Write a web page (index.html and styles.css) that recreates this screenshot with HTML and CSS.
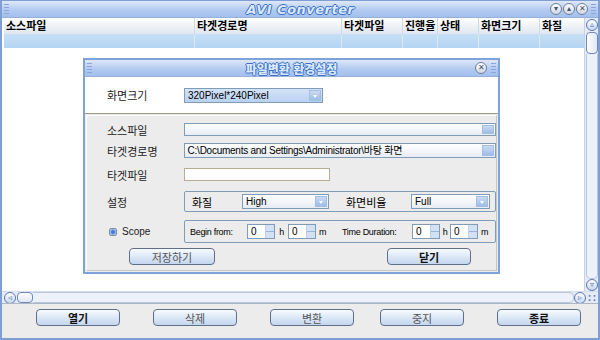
FILE: index.html
```html
<!DOCTYPE html>
<html lang="ko">
<head>
    <meta charset="UTF-8">
    <title>AVI Converter</title>
    <link rel="stylesheet" href="styles.css">
</head>
<body>
    <div class="app">
        <div class="titlebar">
            <span class="grip"></span>
            <span class="title">AVI Converter</span>
            <div class="win-btns">
                <span class="round-btn">&#9662;</span>
                <span class="round-btn">&#9652;</span>
                <span class="round-btn">&#10005;</span>
                <span class="grip"></span>
            </div>
        </div>

        <div class="main">
            <div class="list">
                <div class="list-head">
                    <div class="col c1">소스파일</div>
                    <div class="col c2">타겟경로명</div>
                    <div class="col c3">타겟파일</div>
                    <div class="col c4">진행율</div>
                    <div class="col c5">상태</div>
                    <div class="col c6">화면크기</div>
                    <div class="col c7">화질</div>
                </div>
                <div class="list-row">
                    <div class="col c1"></div>
                    <div class="col c2"></div>
                    <div class="col c3"></div>
                    <div class="col c4"></div>
                    <div class="col c5"></div>
                    <div class="col c6"></div>
                    <div class="col c7"></div>
                </div>
            </div>
            <div class="vscroll">
                <span class="sc-arrow">&#9653;</span>
                <span class="vthumb"></span>
                <span class="vtrack"></span>
                <span class="sc-arrow">&#9663;</span>
            </div>
        </div>

        <div class="hscroll">
            <span class="sc-arrow">&#9667;</span>
            <span class="hthumb"></span>
            <span class="htrack"></span>
            <span class="sc-arrow">&#9657;</span>
            <span class="corner">&#8759;</span>
        </div>

        <div class="footer">
            <button class="btn strong">열기</button>
            <button class="btn dim">삭제</button>
            <button class="btn dim">변환</button>
            <button class="btn dim">중지</button>
            <button class="btn strong">종료</button>
        </div>

        <!-- 환경설정 대화상자 -->
        <div class="dialog">
            <div class="dlg-title">
                <span class="grip"></span>
                <span class="title small">파일변환 환경설정</span>
                <div class="win-btns">
                    <span class="round-btn">&#10005;</span>
                    <span class="grip"></span>
                </div>
            </div>
            <div class="dlg-top">
                <span class="label">화면크기</span>
                <div class="combo w-size"><span class="val">320Pixel*240Pixel</span><span class="drop"></span></div>
            </div>
            <div class="dlg-panel">
                <div class="row r-src">
                    <span class="label">소스파일</span>
                    <div class="field wide"><span class="val"></span><span class="drop"></span></div>
                </div>
                <div class="row r-path">
                    <span class="label">타겟경로명</span>
                    <div class="field wide"><span class="val">C:\Documents and Settings\Administrator\바탕 화면</span><span class="drop"></span></div>
                </div>
                <div class="row r-file">
                    <span class="label">타겟파일</span>
                    <div class="text-input"></div>
                </div>
                <div class="row r-set">
                    <span class="label">설정</span>
                    <div class="group g-set">
                        <span class="sub">화질</span>
                        <div class="combo w-q"><span class="val">High</span><span class="drop"></span></div>
                        <span class="sub ratio">화면비율</span>
                        <div class="combo w-r"><span class="val">Full</span><span class="drop"></span></div>
                    </div>
                </div>
                <div class="row r-scope">
                    <span class="label check"><span class="box"></span>Scope</span>
                    <div class="group g-scope">
                        <span class="sm">Begin from:</span>
                        <div class="spin"><span class="num">0</span><span class="arrows"></span></div>
                        <span class="sm unit">h</span>
                        <div class="spin"><span class="num">0</span><span class="arrows"></span></div>
                        <span class="sm unit">m</span>
                        <span class="sm dur">Time Duration:</span>
                        <div class="spin"><span class="num">0</span><span class="arrows"></span></div>
                        <span class="sm unit tight">h</span>
                        <div class="spin"><span class="num">0</span><span class="arrows"></span></div>
                        <span class="sm unit">m</span>
                    </div>
                </div>
                <div class="row r-btns">
                    <button class="btn dim save">저장하기</button>
                    <button class="btn strong close">닫기</button>
                </div>
            </div>
        </div>
    </div>
</body>
</html>
```

FILE: styles.css
```css
* {
    box-sizing: border-box;
}

body {
    margin: 0;
    width: 600px;
    height: 340px;
    background-color: #fff;
    font-family: "Liberation Sans", "Noto Sans CJK KR", sans-serif;
    font-size: 11px;
    color: #000;
    overflow: hidden;
}

.app {
    width: 600px;
    height: 340px;
    border: 2px solid #7e9fd6;
    border-top-width: 1px;
    display: flex;
    flex-direction: column;
    position: relative;
    background-color: #fff;
}

/* title bars */
.titlebar,
.dlg-title {
    height: 17px;
    display: flex;
    align-items: center;
    background: linear-gradient(to bottom, #dfe8f8, #b3cbf1 55%, #a2bfee);
    border-bottom: 1px solid #97b1dc;
    position: relative;
}

.grip {
    width: 5px;
    height: 11px;
    margin: 0 2px;
    background: repeating-linear-gradient(to bottom, #8aa6d6 0, #8aa6d6 1px, transparent 1px, transparent 3px);
}

.title {
    flex: 1;
    text-align: center;
    font-family: "DejaVu Sans", sans-serif;
    font-size: 13px;
    font-weight: bold;
    font-style: italic;
    color: #dbe9ff;
    letter-spacing: 0.5px;
    text-shadow: 1px 0 0 #3b6fc6, -1px 0 0 #3b6fc6, 0 1px 0 #3b6fc6, 0 -1px 0 #3b6fc6;
    padding-left: 40px;
}

.title.small {
    font-family: "Noto Sans CJK KR", sans-serif;
    font-style: normal;
    font-size: 12px;
    font-weight: 900;
    letter-spacing: 0;
    padding-left: 14px;
}

.win-btns {
    display: flex;
    align-items: center;
    gap: 1px;
}

.round-btn {
    width: 12px;
    height: 12px;
    border-radius: 50%;
    border: 1px solid #6f7f99;
    background: linear-gradient(to bottom, #ffffff, #cfd7e4);
    font-size: 8px;
    line-height: 10px;
    text-align: center;
    color: #44546e;
}

/* list */
.main {
    flex: 1;
    display: flex;
    min-height: 0;
}

.list {
    flex: 1;
    padding-left: 2px;
}

.list-head,
.list-row {
    display: flex;
}

.list-head {
    height: 16px;
    background: linear-gradient(to bottom, #ffffff, #dfe6f0);
    font-family: "Noto Sans CJK KR", sans-serif;
    font-weight: bold;
    font-size: 11px;
    line-height: 15px;
}

.list-row {
    height: 14px;
    background: linear-gradient(to bottom, #c6dff6, #b4d4f3);
}

.col {
    border-right: 1px solid #cfd8e5;
    padding-left: 2px;
    white-space: nowrap;
}

.list-row .col {
    border-right-color: #dbe9f7;
}

.c1 { width: 191px; }
.c2 { width: 147px; }
.c3 { width: 61px; }
.c4 { width: 35px; }
.c5 { width: 41px; }
.c6 { width: 61px; }
.c7 { flex: 1; border-right: none; }

.vscroll {
    width: 14px;
    display: flex;
    flex-direction: column;
    align-items: center;
    background-color: #e6eaf6;
    border-left: 1px solid #c7d2e6;
    padding-top: 1px;
}

.sc-arrow {
    width: 12px;
    height: 12px;
    border-radius: 50%;
    border: 1px solid #5878b4;
    background: linear-gradient(to bottom, #ffffff, #c9d8f0);
    font-size: 8px;
    line-height: 10px;
    text-align: center;
    color: #4b6eb0;
}

.vthumb {
    width: 12px;
    height: 22px;
    margin-top: 1px;
    border-radius: 4px;
    border: 1px solid #6f89b8;
    background: linear-gradient(to right, #ffffff, #dfe7f5);
}

.vtrack {
    flex: 1;
    width: 12px;
    border: 1px solid #b8c6e0;
    border-top: none;
    border-radius: 0 0 5px 5px;
    background-color: #edf1fa;
}

.hscroll {
    height: 12px;
    display: flex;
    align-items: center;
    background-color: #e6eaf6;
    padding-left: 2px;
    border-top: 1px solid #d6ddeb;
}

.hthumb {
    width: 16px;
    height: 11px;
    margin-left: 1px;
    border-radius: 4px;
    border: 1px solid #6f89b8;
    background: linear-gradient(to bottom, #ffffff, #dfe7f5);
}

.htrack {
    flex: 1;
    height: 11px;
    border: 1px solid #b8c6e0;
    border-left: none;
    border-radius: 0 5px 5px 0;
    background-color: #edf1fa;
}

.corner {
    width: 12px;
    font-size: 10px;
    color: #5579bd;
    text-align: center;
    font-weight: bold;
}

/* footer buttons */
.footer {
    height: 35px;
    display: flex;
    align-items: flex-start;
    padding: 5px 0 0 34px;
    gap: 33px;
    background-color: #ececec;
    border-top: 1px solid #b0b7c4;
}

.btn {
    width: 84px;
    height: 17px;
    padding: 0;
    border: 1px solid #5f6f8a;
    border-radius: 4px;
    background: linear-gradient(to bottom, #f8fbff, #dce8f7 50%, #c4d6ee);
    font-family: "Noto Sans CJK KR", sans-serif;
    font-size: 11px;
    line-height: 14px;
    color: #111;
}

.btn.strong {
    font-weight: bold;
}

.btn.dim {
    color: #555;
}

.footer .btn:nth-child(4) {
    margin-left: -7px;
}

/* dialog */
.dialog {
    position: absolute;
    left: 81px;
    top: 57px;
    width: 417px;
    height: 216px;
    border: 2px solid #7ea2da;
    background-color: #ececec;
    display: flex;
    flex-direction: column;
}

.dialog .round-btn {
    margin-right: 1px;
}

.label {
    font-family: "Noto Sans CJK KR", sans-serif;
    font-size: 11px;
    color: #222;
}

.dlg-top {
    height: 37px;
    background-color: #fff;
    display: flex;
    align-items: center;
    padding-left: 22px;
    border-bottom: 1px solid #a09a86;
}

.dlg-top .label {
    width: 77px;
}

.combo,
.field {
    height: 15px;
    display: flex;
    border: 1px solid #7f9db9;
    background: linear-gradient(to bottom, #ffffff, #e7ecf4);
}

.val {
    flex: 1;
    padding-left: 3px;
    font-family: "Liberation Sans", "Noto Sans CJK KR", sans-serif;
    font-size: 10px;
    line-height: 13px;
    white-space: nowrap;
    overflow: hidden;
}

.field .val {
    letter-spacing: -0.25px;
}

.drop {
    width: 12px;
    margin: 1px;
    background: linear-gradient(to bottom, #c8daf3, #9fbde8);
    border: 1px solid #a5bde0;
}

.combo .drop {
    position: relative;
}

.combo .drop::after {
    content: "";
    position: absolute;
    left: 3px;
    top: 4px;
    border: 2px solid transparent;
    border-top: 3px solid #fff;
}

.w-size {
    width: 139px;
    background: linear-gradient(to bottom, #d3e3f7, #b9d1f1);
}

.dlg-panel {
    flex: 1;
    margin: 1px;
    border: 1px solid #c7c7c7;
    border-left-color: #fff;
    border-top-color: #fff;
    padding-left: 20px;
}

.row {
    display: flex;
    align-items: center;
}

.row .label {
    width: 77px;
}

.r-src { margin-top: 7px; height: 13px; }
.r-path { margin-top: 7px; height: 15px; }
.r-file { margin-top: 10px; height: 13px; }
.r-set { margin-top: 10px; height: 21px; }
.r-scope { margin-top: 8px; height: 23px; }
.r-btns { margin-top: 5px; height: 17px; }

.field.wide {
    width: 314px;
    height: 13px;
}

.r-path .field.wide {
    height: 15px;
}

.text-input {
    width: 146px;
    height: 13px;
    border: 1px solid #b5ae92;
    background-color: #fff;
}

.group {
    display: flex;
    align-items: center;
    border: 1px solid #7f9db9;
    border-radius: 2px;
    height: 100%;
}

.g-set {
    width: 312px;
    padding-left: 7px;
}

.sub {
    font-family: "Noto Sans CJK KR", sans-serif;
    font-size: 11px;
    width: 50px;
}

.sub.ratio {
    width: 65px;
    margin-left: 17px;
}

.w-q {
    width: 87px;
}

.w-r {
    width: 79px;
}

.check {
    display: flex;
    align-items: center;
    font-family: "Liberation Sans", sans-serif;
    font-size: 10px;
    padding-left: 2px;
}

.box {
    width: 8px;
    height: 8px;
    margin-right: 5px;
    border-radius: 2px;
    border: 1px solid #7c8fa8;
    background: radial-gradient(circle, #3f7be0 30%, #aec4e4 70%);
}

.g-scope {
    width: 312px;
    padding-left: 5px;
}

.sm {
    font-family: "Liberation Sans", sans-serif;
    font-size: 9px;
    letter-spacing: -0.3px;
}

.sm:first-child {
    width: 57px;
}

.sm.unit {
    width: 13px;
    text-align: center;
}

.sm.unit.tight {
    width: 10px;
}

.sm.dur {
    width: 70px;
    margin-left: 13px;
}

.spin {
    width: 28px;
    height: 15px;
    display: flex;
    border: 1px solid #7f9db9;
    background-color: #fff;
}

.num {
    flex: 1;
    padding-left: 3px;
    font-size: 10px;
    line-height: 13px;
    font-family: "Liberation Sans", sans-serif;
}

.arrows {
    width: 9px;
    background: linear-gradient(to bottom, #d3e1f5 0, #d3e1f5 45%, #9ab4dc 50%, #d3e1f5 55%, #d3e1f5 100%);
    border-left: 1px solid #c0cfe6;
}

.btn.save {
    margin-left: 22px;
    width: 86px;
}

.btn.close {
    margin-left: 172px;
    width: 84px;
}
```
